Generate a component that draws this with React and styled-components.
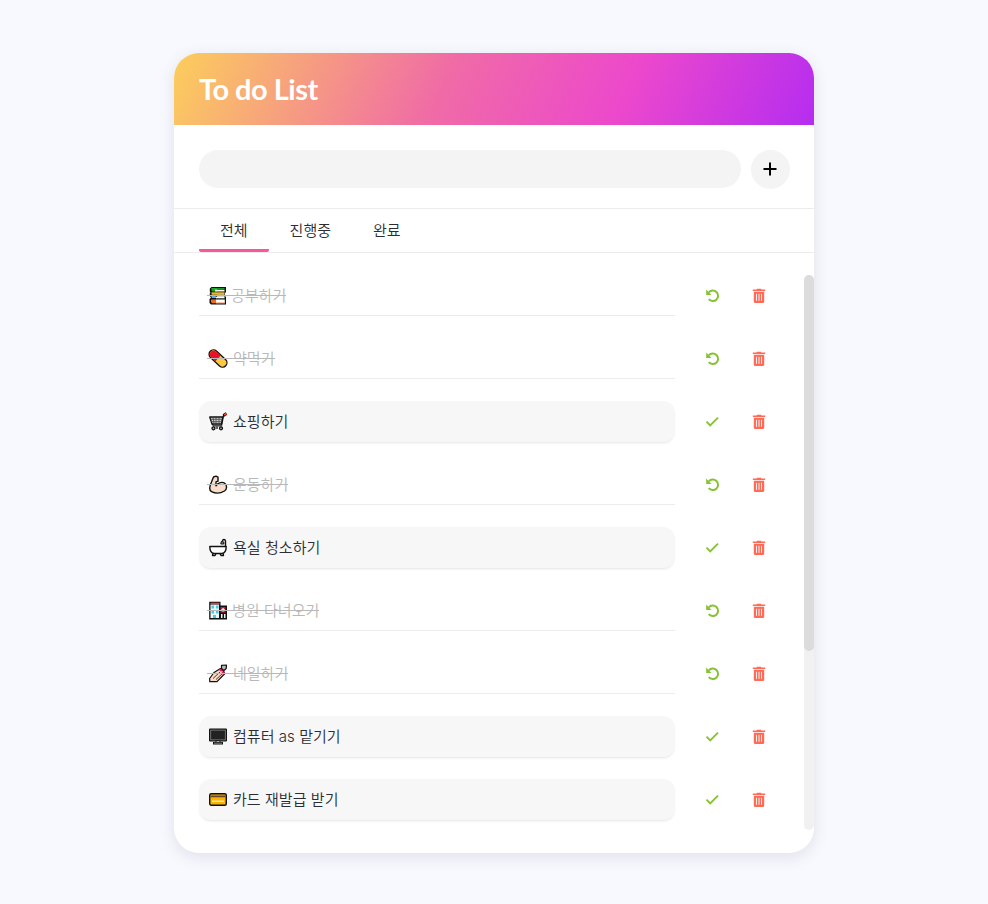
import React from "react";
import styled, { createGlobalStyle, css } from "styled-components";

const GlobalStyle = createGlobalStyle`
  * { box-sizing: border-box; }
  body {
    margin: 0;
    background: #f8f9fe;
    color: #2b2d33;
    font-family: "Inter", "Noto Sans CJK KR DemiLight", "Noto Sans CJK KR", sans-serif;
    font-size: 15px;
    font-weight: 300;
  }
  button, input { font: inherit; color: inherit; border: 0; }
`;

const Page = styled.main`
  height: 904px;
  padding-top: 53px;
  overflow: hidden;
`;

const Card = styled.section`
  display: flex;
  flex-direction: column;
  width: 640px;
  height: 800px;
  margin: 0 auto;
  overflow: hidden;
  background: #fff;
  border-radius: 25px;
  box-shadow: 0 4px 16px rgba(60, 60, 100, 0.13);
`;

const Header = styled.header`
  display: flex;
  align-items: center;
  height: 72px;
  padding: 0 25px 1px;
  background: linear-gradient(113.84deg, #fcce5c 0%, #f06ba6 42.2%, #ec48cc 70%, #b52df0 100%);
`;

const Title = styled.h1`
  margin: 0;
  color: #fff;
  font-family: "Lato", sans-serif;
  font-size: 29px;
  font-weight: 700;
  line-height: 1;
  letter-spacing: -0.5px;
`;

const Form = styled.form`
  display: flex;
  gap: 10px;
  height: 84px;
  padding: 25px 24px 0 25px;
  border-bottom: 1px solid #ececec;
`;

const TextInput = styled.input`
  flex: 1;
  height: 38px;
  padding: 0 20px;
  background: #f4f4f4;
  border-radius: 19px;
  outline: none;
`;

const AddButton = styled.button`
  display: grid;
  place-items: center;
  width: 39px;
  height: 39px;
  padding: 0 1px 1px 0;
  background: #f4f4f4;
  border-radius: 50%;
`;

const Tabs = styled.nav`
  display: flex;
  height: 44px;
  padding: 0 25px;
  border-bottom: 1px solid #ececec;
`;

const Tab = styled.button`
  height: 43px;
  padding: 3px 21px 0;
  background: none;
  line-height: 37px;
  border-bottom: 3px solid ${(p) => (p.$active ? "#f7589a" : "transparent")};
  border-radius: 2px;
`;

const ListArea = styled.div`
  display: flex;
  justify-content: space-between;
  height: 555px;
  margin-top: 22px;
`;

const List = styled.ul`
  display: flex;
  flex-direction: column;
  gap: 22px;
  margin: 0;
  padding: 0 0 0 25px;
  list-style: none;
`;

const Item = styled.li`
  display: flex;
  align-items: center;
  height: 41px;
`;

const Label = styled.div`
  display: flex;
  align-items: flex-start;
  width: 476px;
  height: 41px;
  padding: 0 8px;
  ${(p) =>
    p.$done
      ? css`
          color: #b8b8b8;
          border-bottom: 1px solid #ececec;
        `
      : css`
          background: #f7f7f7;
          border-radius: 12px;
          box-shadow: 0 2px 3px -1px rgba(0, 0, 0, 0.11);
        `}
`;

const Content = styled.span`
  position: relative;
  display: flex;
  align-items: center;
  height: 40px;
  line-height: 38px;
  white-space: pre;
  &::after {
    content: "";
    display: ${(p) => (p.$done ? "block" : "none")};
    position: absolute;
    top: 20px;
    left: 0;
    right: 0;
    height: 1px;
    background: #b8b8b8;
  }
`;

const Text = styled.span`
  margin-top: 2px;
  letter-spacing: 0.05px;
`;

const Emoji = styled.svg`
  width: 20px;
  height: 20px;
  margin: 2px ${(p) => p.$gap}px 0 1px;
  flex: none;
`;

const IconButton = styled.button`
  display: grid;
  place-items: center;
  width: 20px;
  height: 20px;
  padding: 0;
  margin-left: ${(p) => p.$offset}px;
  background: none;
  color: ${(p) => p.$color};
`;

const Scrollbar = styled.div`
  width: 10px;
  height: 555px;
  background: #f1f1f1;
  border-radius: 5px;
`;

const Thumb = styled.div`
  height: 376px;
  background: #dcdcdc;
  border-radius: 5px;
`;

const emojis = {
  books: (
    <g>
      <path d="M2.500.500H17V6H16v4h1v8H2L.500 16.500v-4L2 11 .800 9.500v-3L1.500 6 .800 5V2Z" fill="#111" />
      <path d="M2.200 1.600H8V5H2.800Z" fill="#19a825" />
      <path d="M8 1.600h7.500v1H8Z" fill="#19a825" />
      <path d="M6 3.200h9.500V5H6Z" fill="#fff" />
      <path d="M2.500 5.800h13v2.500h-13Z" fill="#e8b92c" />
      <path d="M8 8.300h7.500v2H8Z" fill="#fff" />
      <path d="M2 9h4l2 2.500H3Z" fill="#61b2e4" />
      <path d="M7 10.300h8.500v1.500H7Z" fill="#fff" />
      <path d="M2 13h5v3.800H3L2 15.500Z" fill="#ef6b20" />
      <path d="M7 13h8.800v3.800H7Z" fill="#fff" />
      <path d="M7 16.100h8.800v.700H7Z" fill="#ef6b20" />
    </g>
  ),
  pill: (
    <g stroke="#111" strokeWidth="1.3" transform="rotate(43 9 9)">
      <rect x="-1.600" y="4.600" width="21.200" height="8.800" rx="4.400" fill="#ffc83d" />
      <path d="M9 5.200H3a3.800 3.800 0 0 0 0 7.600h6Z" fill="#ea1028" stroke="none" />
    </g>
  ),
  cart: (
    <g fill="none" stroke="#111" strokeWidth="1.3" strokeLinejoin="round">
      <path d="M.7 4.500h13L12.500 11.500H3Z" fill="#d0cfce" />
      <path d="M4 5l1 6M7 5v6M10 5v6M1.500 6.800h12M2.200 9.200H13" strokeWidth=".8" stroke="#444" />
      <path d="M16.500 1.500 14.500 3 12.500 13H4.500L3 11.500" />
      <path d="M4 13.500h9" stroke="#777" />
      <circle cx="4.500" cy="15.800" r="1.500" fill="#aaa" />
      <circle cx="12" cy="15.800" r="1.500" fill="#aaa" />
      <path d="M8 14v2.500" />
      <path d="m14.500 3 3-2" stroke="#111" strokeWidth="3" />
      <path d="m15.300 2.500 2-1.200" stroke="#f0523d" strokeWidth="2" />
    </g>
  ),
  muscle: (
    <path
      d="M4.500 1.500 7 .7l2 1v4L7 6.300v4C9 7 13.500 5.800 16 8c2.200 2 2 6-.500 7.500-4 2.400-9.500 2.400-13 .700C-.2 14.500.8 10 2.500 6.500Z"
      fill="#fadcc8"
      stroke="#111"
      strokeWidth="1.4"
      strokeLinejoin="round"
    />
  ),
  bath: (
    <g fill="#fff" stroke="#111" strokeWidth="1.4" strokeLinejoin="round">
      <path d="M4 14.500 3.500 17H6l1-2M11 15l1 2h2.500L14 14" />
      <path d="M.8 8h16.400c0 4-1.200 6.500-4.200 7H5C2 14.500.8 12 .8 8Z" />
      <path d="M16.500 8V2.500C16 .3 13.500.5 13.300 3" fill="none" />
      <path d="m11.800 5.500.500-2.500 2.500.500V5.500Z" fill="#888" strokeWidth="1" />
    </g>
  ),
  hospital: (
    <g>
      <path d="M.2.300h11.300V4H18v14H.2Z" fill="#111" />
      <path d="M1.500 3H10v13.500H1.500Z" fill="#e9f8ff" />
      <path d="M1.500 1.200h9V2.700h-9Z" fill="#ea3a47" />
      <path d="M2.500 4H5v3H2.500Zm4.500 0h2.500v3H7ZM2.500 9H5v3H2.500ZM7 9h2.500v3H7Zm-3 4.500h3v3H4Z" fill="#49c7ef" />
      <path d="M11.500 5.500h5V11h-5Z" fill="#c91f35" />
      <path d="M13.500 6.500h1.200v1.200h1.200v1.200h-1.200v1.200h-1.200V8.900h-1.200V7.700h1.200Z" fill="#fff" />
      <path d="M12 12.500h1.500v4H12Zm3 0h1.500v4H15Z" fill="#eee" />
    </g>
  ),
  nails: (
    <g stroke="#111" strokeWidth="1.2" strokeLinejoin="round">
      <path d="m.6 14 4.400-6L11.500 4l2 2 1.500 1.500.500 2-1.500 1.500-6 6.200H.8Z" fill="#fadcc8" />
      <path d="m4 14 7-6.500M7 15l6.500-6" fill="none" strokeWidth=".8" />
      <path d="m10.500 5 1.500-.500 1.500 1-1.500 1ZM13 8.500l2-1v1.500l-1 .500Z" stroke="#d6185a" fill="#d6185a" />
      <path d="m12.500.8 5-.3-.3 3.500-2.200 2-2.500-2Z" fill="#b9b9b9" />
    </g>
  ),
  computer: (
    <g>
      <rect x=".6" y="1.600" width="16.800" height="11.800" rx=".5" fill="#222" stroke="#111" strokeWidth="1.200" />
      <rect x="1.700" y="2.600" width="14.600" height="9.800" fill="none" stroke="#858585" strokeWidth=".800" />
      <path d="M6.500 13h5v1.500h2.500v2.500H4v-2.500h2.500Z" fill="#111" />
      <path d="M7.500 13.500h3v1h-3ZM5 15.300h8v.700H5Z" fill="#aaa" />
    </g>
  ),
  card: (
    <g>
      <rect x=".7" y="3.200" width="16.600" height="11.600" rx="1.500" fill="#f9b300" stroke="#111" strokeWidth="1.400" />
      <path d="M1.400 4.900h15.200v1.800H1.400Z" fill="#6a462f" />
      <path d="M3 10h12v1.500H3Z" fill="#ffe5a0" />
    </g>
  ),
};

const todos = [
  { emoji: "books", text: "공부하기", done: true, gap: 3 },
  { emoji: "pill", text: "약먹기", done: true, gap: 5 },
  { emoji: "cart", text: "쇼핑하기", gap: 5 },
  { emoji: "muscle", text: "운동하기", done: true, gap: 5 },
  { emoji: "bath", text: "욕실 청소하기", gap: 5 },
  { emoji: "hospital", text: "병원 다녀오기", done: true, gap: 4 },
  { emoji: "nails", text: "네일하기", done: true, gap: 5 },
  { emoji: "computer", text: "컴퓨터 as 맡기기", gap: 5 },
  { emoji: "card", text: "카드 재발급 받기", gap: 5 },
];

const PlusIcon = () => (
  <svg width="14" height="14" viewBox="0 0 14 14">
    <path d="M7 .5v13M.5 7h13" stroke="#000" strokeWidth="2" />
  </svg>
);

const UndoIcon = () => (
  <svg width="16" height="16" viewBox="0 0 16 16" fill="none" stroke="currentColor">
    <path d="M3.800 4.300A5.300 5.300 0 1 1 3.700 11.200" strokeWidth="2" />
    <path d="M1.200 1.500V7h5.300Z" fill="currentColor" stroke="none" />
  </svg>
);

const CheckIcon = () => (
  <svg width="16" height="16" viewBox="0 0 16 16" fill="none" stroke="currentColor">
    <path d="m1.500 7.700 3.700 3.700 7.800-7.800" strokeWidth="1.900" />
  </svg>
);

const TrashIcon = () => (
  <svg width="14" height="16" viewBox="0 0 14 16">
    <path d="M.8 1.500h3.700L5 .800h4l.5.700h3.700V3H.8Z" fill="currentColor" />
    <path d="M1.800 3.800h10.400v9.700a1.500 1.500 0 0 1-1.500 1.500H3.300a1.500 1.500 0 0 1-1.500-1.500Z" fill="currentColor" />
    <path d="M4.500 5.800v7M7 5.800v7M9.500 5.800v7" stroke="#fff" strokeWidth=".9" />
  </svg>
);

export default function App() {
  return (
    <>
      <GlobalStyle />
      <Page>
        <Card>
          <Header>
            <Title>To do List</Title>
          </Header>
          <Form>
            <TextInput aria-label="todo" />
            <AddButton type="button" aria-label="add">
              <PlusIcon />
            </AddButton>
          </Form>
          <Tabs>
            <Tab $active>전체</Tab>
            <Tab>진행중</Tab>
            <Tab>완료</Tab>
          </Tabs>
          <ListArea>
            <List>
              {todos.map((todo) => (
                <Item key={todo.text}>
                  <Label $done={todo.done}>
                    <Content $done={todo.done}>
                      <Emoji viewBox="-1 -.5 20 20" $gap={todo.gap}>
                        {emojis[todo.emoji]}
                      </Emoji>
                      <Text>{todo.text}</Text>
                    </Content>
                  </Label>
                  <IconButton $offset={28} $color="#86c232" aria-label="toggle">
                    {todo.done ? <UndoIcon /> : <CheckIcon />}
                  </IconButton>
                  <IconButton $offset={26} $color="#ff6b57" aria-label="delete">
                    <TrashIcon />
                  </IconButton>
                </Item>
              ))}
            </List>
            <Scrollbar>
              <Thumb />
            </Scrollbar>
          </ListArea>
        </Card>
      </Page>
    </>
  );
}
